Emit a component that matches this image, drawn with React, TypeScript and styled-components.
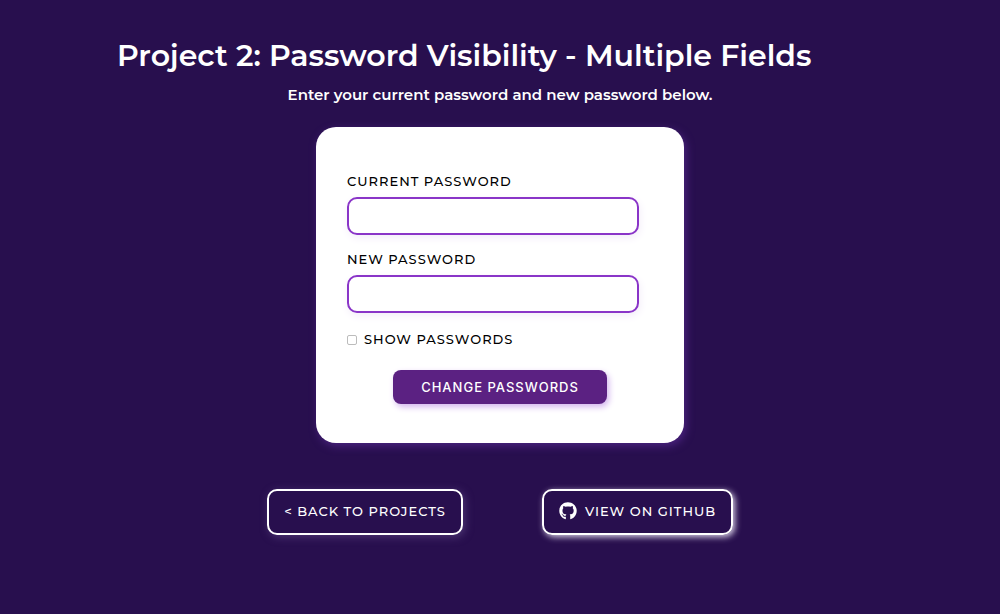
import React, { useState } from "react";
import styled, { createGlobalStyle, css } from "styled-components";
import { FaGithub } from "react-icons/fa";

const GlobalStyle = createGlobalStyle`
  *, *::before, *::after { box-sizing: border-box; }
  body {
    margin: 0;
    background: #280f4e;
    color: #fff;
    font-family: Montserrat, Inter, sans-serif;
    font-weight: 500;
  }
`;

const Page = styled.main`
  display: flex;
  flex-direction: column;
  align-items: center;
  padding: 36px 16px 48px;
`;

const Header = styled.header`
  width: 100%;
  max-width: 766px;
`;

const Title = styled.h1`
  margin: 0;
  font-size: 30px;
  line-height: 40px;
  font-weight: 600;
`;

const Subtitle = styled.p`
  margin: 8px 0 0;
  font-size: 15px;
  line-height: 22px;
  font-weight: 600;
  text-align: center;
`;

const Card = styled.form`
  display: flex;
  flex-direction: column;
  width: 100%;
  max-width: 368px;
  margin-top: 21px;
  padding: 44px 45px 39px 31px;
  border-radius: 20px;
  background: #fff;
  color: #000;
  box-shadow: 2px 3px 8px #4b2380;
`;

const Field = styled.div`
  display: flex;
  flex-direction: column;
  margin-bottom: 14px;
`;

const labelText = css`
  font-size: 13px;
  line-height: 20px;
  font-weight: 500;
  letter-spacing: 1px;
  text-transform: uppercase;
`;

const Label = styled.label`
  ${labelText}
  margin-bottom: 6px;
`;

const Input = styled.input`
  width: 100%;
  height: 38px;
  padding: 0 12px;
  border: 2px solid #8a35c8;
  border-radius: 10px;
  background: #fff;
  font: inherit;
  font-size: 16px;
  box-shadow: 1px 3px 8px #f3edf9;
`;

const CheckRow = styled.label`
  ${labelText}
  display: flex;
  align-items: center;
  gap: 7px;
  margin-top: 2px;
`;

const Checkbox = styled.input`
  appearance: none;
  width: 10px;
  height: 10px;
  margin: 2px 0 0;
  border: 1px solid #bcbcbc;
  border-radius: 2px;
  background: #fff;
  &:checked { background: #5b2182; }
`;

const Submit = styled.button`
  align-self: center;
  width: 214px;
  height: 34px;
  margin: 21px 0 0 14px;
  border: 0;
  border-radius: 8px;
  background: #5b2182;
  color: #fff;
  font-family: Inter, sans-serif;
  font-size: 13px;
  font-weight: 500;
  letter-spacing: 1px;
  text-transform: uppercase;
  box-shadow: 2px 3px 6px #d3b5ee;
`;

const Links = styled.nav`
  display: flex;
  flex-wrap: wrap;
  justify-content: center;
  gap: 16px 79px;
  margin-top: 46px;
`;

const LinkButton = styled.a<{ $raised?: boolean }>`
  ${labelText}
  display: flex;
  align-items: center;
  justify-content: center;
  gap: 8px;
  min-width: ${(p) => (p.$raised ? 191 : 196)}px;
  height: 46px;
  padding: 0 12px 2px;
  border: 2px solid #fff;
  border-radius: 10px;
  color: #fff;
  text-decoration: none;
  box-shadow: ${(p) => (p.$raised ? "2px 2px 6px #d8cfe6" : "2px 2px 8px #4d3574")};
`;

export default function App() {
  const [visible, setVisible] = useState(false);
  const type = visible ? "text" : "password";

  return (
    <>
      <GlobalStyle />
      <Page>
        <Header>
          <Title>Project 2: Password Visibility - Multiple Fields</Title>
          <Subtitle>Enter your current password and new password below.</Subtitle>
        </Header>
        <Card onSubmit={(e) => e.preventDefault()}>
          <Field>
            <Label htmlFor="current">Current Password</Label>
            <Input id="current" type={type} />
          </Field>
          <Field>
            <Label htmlFor="new">New Password</Label>
            <Input id="new" type={type} />
          </Field>
          <CheckRow htmlFor="show">
            <Checkbox
              id="show"
              type="checkbox"
              checked={visible}
              onChange={(e) => setVisible(e.target.checked)}
            />
            Show Passwords
          </CheckRow>
          <Submit type="submit">Change Passwords</Submit>
        </Card>
        <Links>
          <LinkButton href="#projects">&lt; Back to Projects</LinkButton>
          <LinkButton href="#github" $raised>
            <FaGithub size={18} aria-hidden />
            View on GitHub
          </LinkButton>
        </Links>
      </Page>
    </>
  );
}
